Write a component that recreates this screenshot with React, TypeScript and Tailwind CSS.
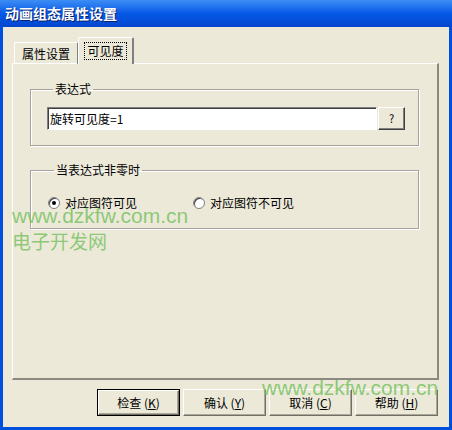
import React from "react";

const font = { fontFamily: '"Noto Sans CJK SC", "Noto Sans", sans-serif' };

function Btn({ label, acc, def }: { label: string; acc: string; def?: boolean }) {
  return (
    <div className={`w-[83px] h-[27px] ${def ? "border border-black" : ""}`}>
      <div className="w-full h-full flex items-center justify-center bg-[#ECE9D8] border-t border-l border-white border-r border-b border-r-[#716F64] border-b-[#716F64] shadow-[inset_-1px_-1px_0_#ACA899] text-[12px] text-black">
        {label}&nbsp;(<span className="underline">{acc}</span>)
      </div>
    </div>
  );
}

function Radio({ checked }: { checked?: boolean }) {
  return (
    <div className="w-[12px] h-[12px] shrink-0 rounded-full bg-white border border-[#808080] shadow-[inset_1px_1px_0_#404040] flex items-center justify-center">
      {checked && <div className="w-[4px] h-[4px] rounded-full bg-black" />}
    </div>
  );
}

export default function App() {
  return (
    <div className="w-[452px] h-[430px] flex flex-col bg-[#0050E0] relative overflow-hidden" style={font}>
      <div className="h-[27px] shrink-0 bg-gradient-to-b from-[#3D8DF5] via-[#0358E5] to-[#0446CF] flex items-center px-[5px]">
        <span className="text-white font-bold text-[14px] [text-shadow:1px_1px_0_#0A1E6B]">动画组态属性设置</span>
      </div>
      <div className="flex-1 mx-[3px] mb-[3px] bg-[#ECE9D8] flex flex-col pt-[10px] pl-[9px] pr-[10px] pb-[11px]">
        <div className="flex items-end h-[26px] pl-[2px] relative z-10">
          <div className="h-[22px] w-[64px] flex items-center justify-center text-[12px] text-black border-t border-l border-white border-r border-r-[#808080] rounded-t-[2px] mb-[-1px]">
            属性设置
          </div>
          <div className="h-[27px] w-[56px] flex items-center justify-center text-[12px] text-black border-t border-l border-white border-r-2 border-r-[#808080] bg-[#ECE9D8] rounded-t-[2px] mb-[-1px]">
            <span className="outline outline-1 outline-dotted outline-black px-[2px] leading-[16px]">可见度</span>
          </div>
        </div>
        <div className="h-[317px] border-t border-l border-white border-r-2 border-b-2 border-r-[#8A8A80] border-b-[#8A8A80] px-[17px] pt-[18px] flex flex-col">
          <fieldset className="h-[64px] border border-[#A6A49A] shadow-[inset_1px_1px_0_white,1px_1px_0_white] pl-[16px] pr-[13px] mr-[1px]">
            <legend className="text-[12px] text-black px-[2px] ml-[6px] leading-[14px]">表达式</legend>
            <div className="flex mt-[11px]">
              <div className="flex-1 h-[23px] bg-white border-t border-l border-[#808080] border-b border-r border-b-white border-r-white shadow-[inset_1px_1px_0_#404040] flex items-center pl-[2px] text-[12px] text-black">
                旋转可见度=1
              </div>
              <div className="w-[27px] h-[23px] ml-[1px] flex items-center justify-center bg-[#ECE9D8] border-t border-l border-white border-r border-b border-r-[#404040] border-b-[#404040] shadow-[inset_-1px_-1px_0_#808080] text-[11px] text-black">
                ?
              </div>
            </div>
          </fieldset>
          <fieldset className="h-[66px] mt-[17px] border border-[#A6A49A] shadow-[inset_1px_1px_0_white,1px_1px_0_white] mr-[1px] pl-[17px]">
            <legend className="text-[12px] text-black px-[2px] ml-[6px] leading-[14px]">当表达式非零时</legend>
            <div className="flex items-center mt-[17px] text-[12px] text-black">
              <Radio checked />
              <span className="ml-[5px]">对应图符可见</span>
              <div className="ml-[56px]"><Radio /></div>
              <span className="ml-[5px]">对应图符不可见</span>
            </div>
          </fieldset>
        </div>
        <div className="flex justify-end gap-[3px] mt-[9px] pr-[1px]">
          <Btn label="检查" acc="K" def />
          <Btn label="确认" acc="Y" />
          <Btn label="取消" acc="C" />
          <Btn label="帮助" acc="H" />
        </div>
      </div>
      <div className="absolute left-[12px] top-[202px] text-[21px] leading-[28px] text-[#72C05C]/80 pointer-events-none" style={{ fontFamily: '"Liberation Sans", sans-serif' }}>
        www.dzkfw.com.cn
      </div>
      <div className="absolute left-[12px] top-[228px] text-[19px] leading-[26px] text-[#72C05C]/80 pointer-events-none">
        电子开发网
      </div>
      <div className="absolute left-[262px] top-[374px] text-[21px] leading-[28px] text-[#72C05C]/80 pointer-events-none" style={{ fontFamily: '"Liberation Sans", sans-serif' }}>
        www.dzkfw.com.cn
      </div>
    </div>
  );
}
